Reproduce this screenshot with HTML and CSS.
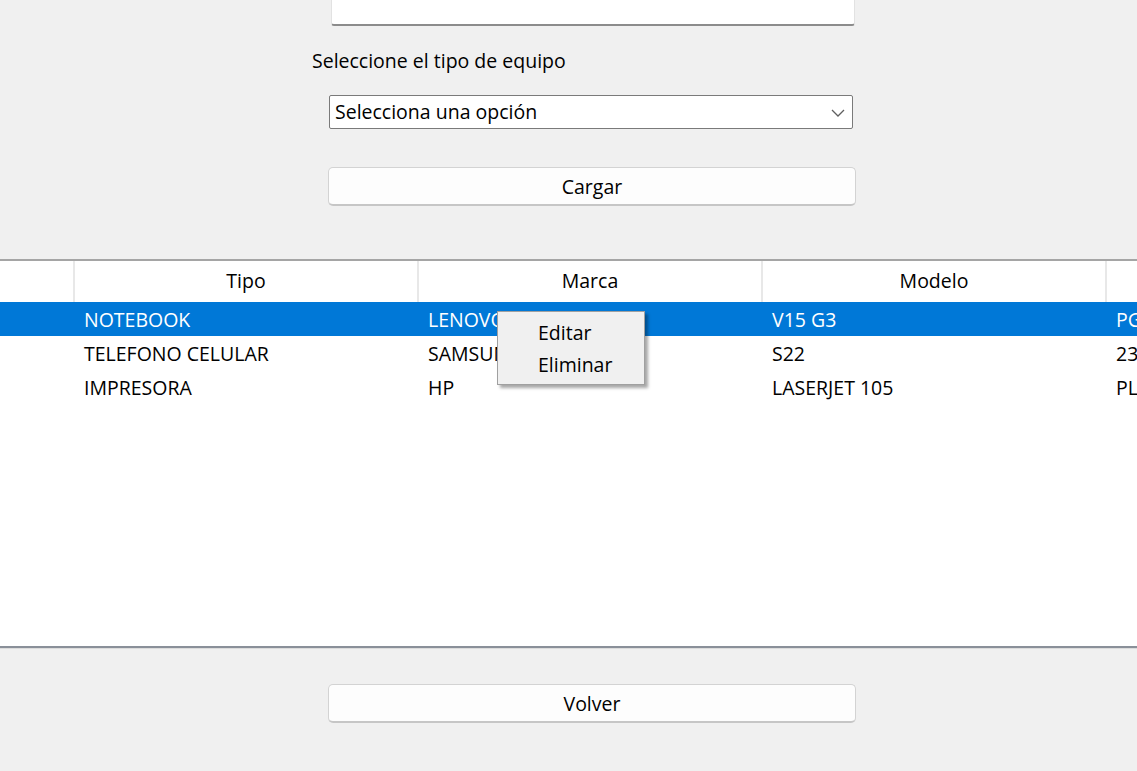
FILE: index.html
```html
<!DOCTYPE html>
<html lang="es">
<head>
<meta charset="utf-8">
<title>Equipos</title>
<link rel="stylesheet" href="styles.css">
</head>
<body>
<div class="page">
  <div class="form">
    <div class="text-input"></div>
    <label class="label">Seleccione el tipo de equipo</label>
    <div class="select">
      <span>Selecciona una opción</span>
      <svg class="chev" width="14" height="8" viewBox="0 0 14 8"><path d="M1 1 L7 7 L13 1" fill="none" stroke="#5f5f5f" stroke-width="1.3"/></svg>
    </div>
    <div class="btn btn-cargar">Cargar</div>
  </div>

  <div class="table-wrap">
    <div class="table">
      <div class="row head">
        <div class="cell"></div>
        <div class="cell">Tipo</div>
        <div class="cell">Marca</div>
        <div class="cell">Modelo</div>
        <div class="cell"></div>
      </div>
      <div class="row selected">
        <div class="cell"></div>
        <div class="cell">NOTEBOOK</div>
        <div class="cell">LENOVO</div>
        <div class="cell">V15 G3</div>
        <div class="cell">PG</div>
      </div>
      <div class="row">
        <div class="cell"></div>
        <div class="cell">TELEFONO CELULAR</div>
        <div class="cell">SAMSUNG</div>
        <div class="cell">S22</div>
        <div class="cell">23G</div>
      </div>
      <div class="row">
        <div class="cell"></div>
        <div class="cell">IMPRESORA</div>
        <div class="cell">HP</div>
        <div class="cell">LASERJET 105</div>
        <div class="cell">PL</div>
      </div>
    </div>
    <div class="menu">
      <div class="menu-item">Editar</div>
      <div class="menu-item">Eliminar</div>
    </div>
  </div>

  <div class="footer">
    <div class="btn btn-volver">Volver</div>
  </div>
</div>
</body>
</html>
```

FILE: styles.css
```css
html, body {
  margin: 0;
  padding: 0;
  background: #f0f0f0;
}
body {
  width: 1137px;
  height: 771px;
  overflow: hidden;
  font-family: "Open Sans", "Noto Sans", sans-serif;
  font-size: 19.5px;
  letter-spacing: 0;
  color: #000;
}
.page {
  display: flex;
  flex-direction: column;
}
.form {
  display: flex;
  flex-direction: column;
  height: 259px;
}
.text-input {
  margin-left: 331px;
  width: 522px;
  height: 24px;
  background: #fff;
  border-bottom: 2px solid #8c8c8c;
  border-right: 1px solid #e2e2e2;
  border-left: 1px solid #e2e2e2;
  border-radius: 0 0 3px 3px;
}
.label {
  margin-left: 312px;
  margin-top: 21px;
  height: 28px;
  line-height: 28px;
}
.select {
  margin-left: 329px;
  margin-top: 20px;
  height: 32px;
  background: #fff;
  border: 1.5px solid #7a7a7a;
  border-radius: 2px;
  display: flex;
  align-items: center;
  justify-content: space-between;
  padding: 0 7px 0 5px;
  box-sizing: content-box;
  width: 510px;
}
.select span {
  line-height: 32px;
}
.chev {
  margin-top: 1px;
}
.btn {
  width: 526px;
  height: 36px;
  background: #fdfdfd;
  border: 1px solid #d3d3d3;
  border-bottom: 2px solid #c6c6c6;
  border-radius: 5px;
  display: flex;
  align-items: center;
  justify-content: center;
  box-sizing: content-box;
}
.btn-cargar {
  margin-left: 328px;
  margin-top: 38px;
}
.table-wrap {
  position: relative;
  height: 385px;
  background: #fff;
  border-top: 2px solid #a5a5a5;
  border-bottom: 2px solid #8a9099;
  box-shadow: 0 1px 0 #dcdcdc;
  overflow: hidden;
}
.table {
  display: flex;
  flex-direction: column;
  width: 1451px;
}
.row {
  display: grid;
  grid-template-columns: 75px 344px 344px 344px 344px;
  height: 34px;
  align-items: center;
}
.row .cell {
  padding-left: 9px;
  white-space: nowrap;
  overflow: hidden;
}
.row.head {
  height: 41px;
}
.row.head .cell {
  height: 41px;
  line-height: 40px;
  text-align: center;
  padding-left: 0;
  border-right: 2px solid #e8e8e8;
  box-sizing: border-box;
}
.row.selected {
  background: #0078d7;
  color: #fff;
}
.menu {
  position: absolute;
  left: 497px;
  top: 50px;
  width: 148px;
  height: 74px;
  background: #f0f0f0;
  border: 1px solid #a0a0a0;
  box-shadow: 3px 3px 3px rgba(0,0,0,0.35);
  display: flex;
  flex-direction: column;
  padding-top: 5px;
  box-sizing: border-box;
}
.menu-item {
  padding-left: 40px;
  height: 32px;
  line-height: 32px;
}
.footer {
  display: flex;
  padding-top: 36px;
}
.btn-volver {
  margin-left: 328px;
}
```
